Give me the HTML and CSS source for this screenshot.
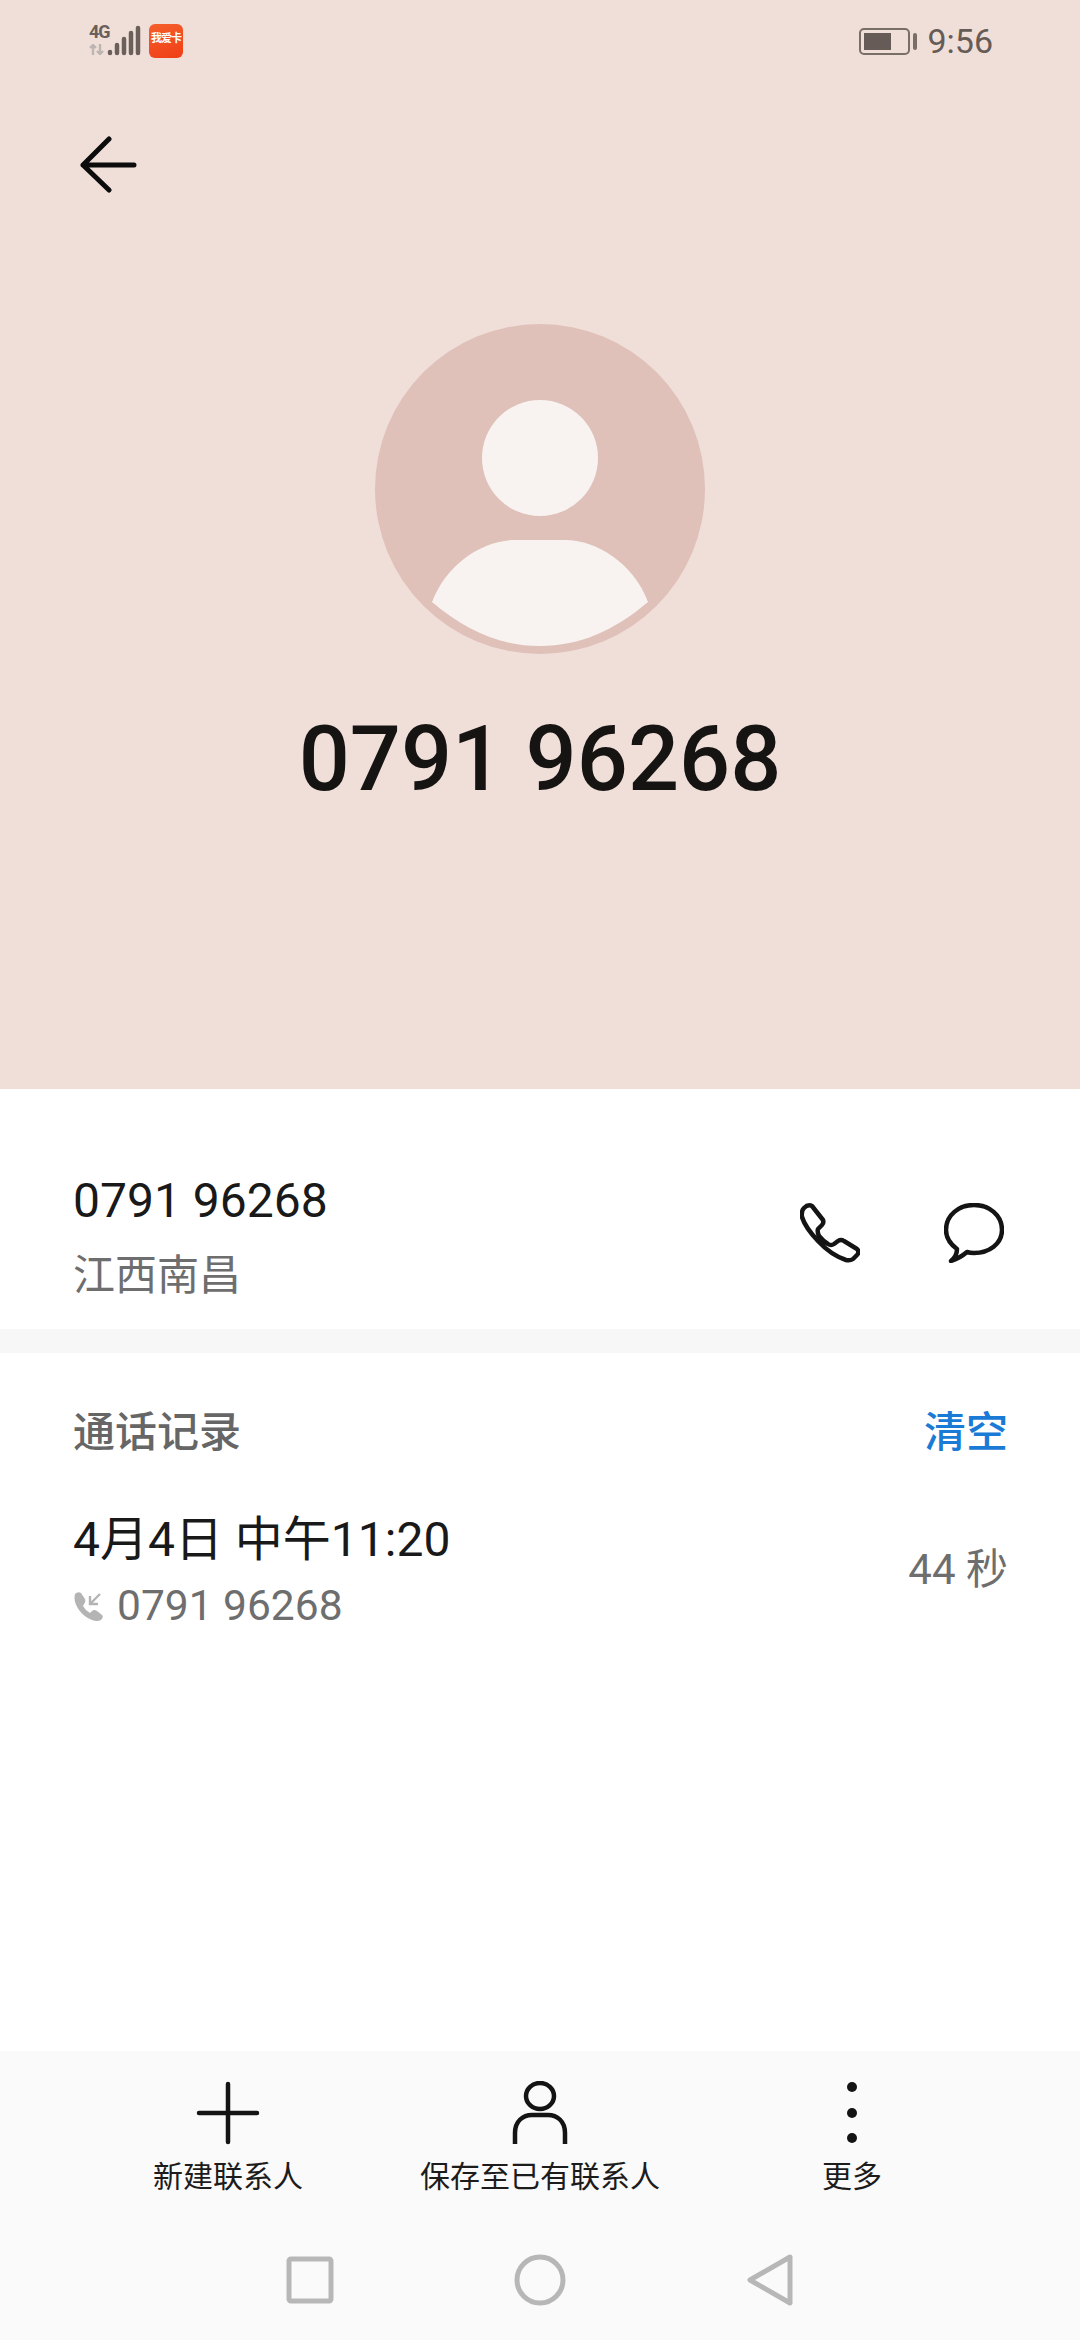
FILE: index.html
```html
<!DOCTYPE html>
<html lang="zh-CN">
<head>
    <meta charset="UTF-8">
    <meta name="viewport" content="width=device-width, initial-scale=1.0">
    <title>0791 96268</title>
    <link rel="stylesheet" href="styles.css">
</head>
<body>
    <div class="screen">
        <header class="contact-header">
            <div class="status-bar">
                <div class="status-left">
                    <div class="network">
                        <span class="network-type">4G</span>
                        <svg class="network-arrows" width="16" height="11" viewBox="0 0 16 11">
                            <path d="M4 11V1M1 4l3-3 3 3M11 0v10M8 7l3 3 3-3" fill="none" stroke="#bdb5b1" stroke-width="2.4"/>
                        </svg>
                    </div>
                    <svg class="signal" width="34" height="32" viewBox="0 0 34 32">
                        <g fill="none" stroke="#6a5f5b" stroke-width="4.5" stroke-linecap="round">
                            <path d="M3 27v1M10 20v8M17 14v14M24 8v20M31 3v25"/>
                        </g>
                    </svg>
                    <div class="sim-card">我爱卡</div>
                </div>
                <div class="status-right">
                    <div class="battery"><div class="battery-level"></div></div>
                    <div class="battery-cap"></div>
                    <span class="clock">9:56</span>
                </div>
            </div>

            <div class="back-row">
                <svg width="60" height="60" viewBox="0 0 60 60">
                    <path d="M30 3L4 29l26 25M4 29h51" fill="none" stroke="#0c0c0c" stroke-width="5" stroke-linecap="round" stroke-linejoin="round"/>
                </svg>
            </div>

            <svg class="avatar" width="330" height="330" viewBox="0 0 330 330">
                <circle cx="165" cy="165" r="165" fill="#dfc1b9"/>
                <circle cx="165" cy="134" r="58" fill="#f8f3f1"/>
                <path d="M57 278C72 238 110 216 140 216h50c30 0 68 22 83 62C240 306 205 322 165 322S90 306 57 278Z" fill="#f8f3f1"/>
            </svg>

            <h1 class="contact-title">0791 96268</h1>
        </header>

        <section class="number-row">
            <div class="number-text">
                <div class="number-value">0791 96268</div>
                <div class="number-place">江西南昌</div>
            </div>
            <div class="number-actions">
                <svg width="60" height="60" viewBox="0 0 60 60">
                    <path d="M4 5Q8 1 12 3L23 17Q24 20 22 22L18 26Q17 29 19 33Q23 38 28 41Q31 43 34 41L38 38Q41 36 44 38L57 46Q60 49 57 52L53 56Q50 58 46 57Q31 52 18 38Q5 24 2 14Q1 8 4 5Z" fill="none" stroke="#141414" stroke-width="4.5" stroke-linejoin="round"/>
                </svg>
                <svg width="60" height="60" viewBox="0 0 60 60">
                    <path d="M13 46C5 40 2 34 2 27C2 12 15 2 30 2C45 2 58 12 58 27C58 41 45 50 30 50Q26 50 23 49Q16 55 7 58Q13 53 13 46Z" fill="none" stroke="#141414" stroke-width="4.5" stroke-linejoin="round"/>
                </svg>
            </div>
        </section>

        <div class="divider"></div>

        <section class="history">
            <div class="history-head">
                <h3>通话记录</h3>
                <span class="history-clear">清空</span>
            </div>
            <div class="history-item">
                <div>
                    <div class="history-date">4月4日 中午11:20</div>
                    <div class="history-number">
                        <svg width="30" height="30" viewBox="0 0 30 30">
                            <path d="M2 3Q5 0 8 2L12 8Q13 11 11 13L10 15Q12 19 17 22L19 20Q21 18 24 20L29 24Q31 26 28 29Q24 31 19 29Q11 26 6 19Q0 10 2 3Z" fill="#b4b4b4"/>
                            <path d="M27 3L17 13M17 5v8h8" fill="none" stroke="#b4b4b4" stroke-width="2.4"/>
                        </svg>
                        <span>0791 96268</span>
                    </div>
                </div>
                <div class="history-duration">44 秒</div>
            </div>
        </section>

        <footer class="bottom">
            <div class="actions">
                <div class="action">
                    <svg width="64" height="64" viewBox="0 0 64 64">
                        <path d="M32 3v58M3 32h58" fill="none" stroke="#141414" stroke-width="4.5" stroke-linecap="round"/>
                    </svg>
                    <span>新建联系人</span>
                </div>
                <div class="action">
                    <svg width="64" height="64" viewBox="0 0 64 64">
                        <ellipse cx="32" cy="15" rx="14" ry="13" fill="none" stroke="#141414" stroke-width="4.5"/>
                        <path d="M7 63V52C7 40 15 34 24 34h16c9 0 17 6 17 18v11" fill="none" stroke="#141414" stroke-width="4.5"/>
                    </svg>
                    <span>保存至已有联系人</span>
                </div>
                <div class="action">
                    <svg width="64" height="64" viewBox="0 0 64 64">
                        <circle cx="32" cy="6" r="5" fill="#141414"/>
                        <circle cx="32" cy="32" r="5" fill="#141414"/>
                        <circle cx="32" cy="57" r="5" fill="#141414"/>
                    </svg>
                    <span>更多</span>
                </div>
            </div>
            <nav class="nav-bar">
                <svg width="48" height="48" viewBox="0 0 48 48">
                    <rect x="3" y="3" width="42" height="42" rx="2" fill="none" stroke="#b7b7b7" stroke-width="5"/>
                </svg>
                <svg width="52" height="52" viewBox="0 0 52 52">
                    <circle cx="26" cy="26" r="23" fill="none" stroke="#b7b7b7" stroke-width="5"/>
                </svg>
                <svg width="48" height="52" viewBox="0 0 48 52">
                    <path d="M44 3L4 26l40 23Z" fill="none" stroke="#b7b7b7" stroke-width="5" stroke-linejoin="round"/>
                </svg>
            </nav>
        </footer>
    </div>
</body>
</html>
```

FILE: styles.css
```css
body {
    margin: 0;
    padding: 0;
    background: white;
    font-family: Roboto, 'Noto Sans CJK SC', sans-serif;
}

h1, h3 {
    margin: 0;
    font-weight: 500;
}

.screen {
    width: 1080px;
    height: 2340px;
    display: flex;
    flex-direction: column;
    overflow: hidden;
}

.contact-header {
    height: 1089px;
    flex-shrink: 0;
    background: #f0dfd9;
    display: flex;
    flex-direction: column;
    align-items: center;
}

.status-bar {
    width: 100%;
    height: 80px;
    box-sizing: border-box;
    padding: 24px 87px 0 89px;
    display: flex;
    justify-content: space-between;
    align-items: flex-start;
}

.status-left {
    display: flex;
    align-items: flex-start;
}

.network {
    width: 18px;
    display: flex;
    flex-direction: column;
    gap: 5px;
}

.network-type {
    font-family: Roboto, sans-serif;
    font-size: 18px;
    line-height: 15px;
    font-weight: 700;
    color: #6a5f5b;
    letter-spacing: -1px;
}

.signal {
    margin-top: 1px;
    margin-right: 8px;
}

.sim-card {
    width: 34px;
    height: 34px;
    box-sizing: border-box;
    padding-top: 8px;
    border-radius: 6px;
    background: linear-gradient(160deg, #f5602c, #f03d16);
    color: white;
    font-size: 11px;
    line-height: 13px;
    font-weight: 700;
    text-align: center;
    letter-spacing: -1px;
}

.status-right {
    display: flex;
    align-items: center;
}

.battery {
    width: 51px;
    height: 27px;
    box-sizing: border-box;
    padding: 3px;
    border: 2px solid #7a6e69;
    border-radius: 5px;
}

.battery-level {
    width: 27px;
    height: 100%;
    background: #665b56;
}

.battery-cap {
    width: 4px;
    height: 17px;
    margin-left: 3px;
    border-radius: 2px;
    background: #7a6e69;
}

.clock {
    margin-left: 10px;
    font-size: 34px;
    line-height: 34px;
    color: #665b56;
}

.back-row {
    width: 100%;
    box-sizing: border-box;
    padding: 56px 0 0 79px;
    height: 244px;
}

.avatar {
    display: block;
}

.contact-title {
    margin-top: 56px;
    font-size: 90px;
    line-height: 100px;
    color: #161412;
}

.number-row {
    height: 240px;
    flex-shrink: 0;
    box-sizing: border-box;
    padding: 84px 76px 0 73px;
    display: flex;
    justify-content: space-between;
}

.number-value {
    font-size: 48px;
    line-height: 56px;
    color: #191919;
}

.number-place {
    margin-top: 22px;
    font-size: 42px;
    line-height: 50px;
    color: #6e6e6e;
}

.number-actions {
    display: flex;
    gap: 84px;
    padding-top: 30px;
}

.divider {
    height: 24px;
    flex-shrink: 0;
    background: #f7f7f7;
}

.history {
    flex: 1;
    box-sizing: border-box;
    padding: 52px 72px 0 73px;
}

.history-head {
    display: flex;
    justify-content: space-between;
    align-items: center;
}

.history-head h3 {
    font-size: 42px;
    line-height: 56px;
    color: #666;
}

.history-clear {
    font-size: 42px;
    line-height: 56px;
    font-weight: 500;
    color: #1a7bd6;
}

.history-item {
    margin-top: 48px;
    display: flex;
    justify-content: space-between;
    align-items: center;
}

.history-date {
    font-size: 48px;
    line-height: 62px;
    color: #191919;
}

.history-number {
    margin-top: 10px;
    display: flex;
    align-items: center;
    gap: 14px;
    font-size: 42.5px;
    line-height: 50px;
    color: #6e6e6e;
}

.history-duration {
    font-size: 42px;
    line-height: 50px;
    color: #6e6e6e;
}

.bottom {
    height: 289px;
    flex-shrink: 0;
    background: #fafafa;
}

.actions {
    padding: 30px 72px 0;
    display: grid;
    grid-template-columns: repeat(3, 1fr);
}

.action {
    display: flex;
    flex-direction: column;
    align-items: center;
    gap: 11px;
    font-size: 30px;
    line-height: 42px;
    color: #1c1c1c;
}

.nav-bar {
    margin-top: 56px;
    padding-left: 286px;
    display: flex;
    align-items: center;
    gap: 180px;
}
```
